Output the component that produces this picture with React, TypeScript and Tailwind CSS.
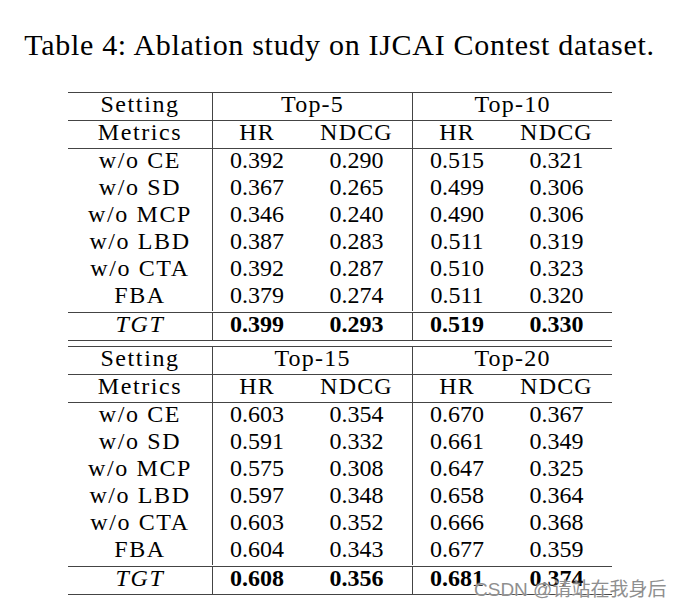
import { FC } from 'react';

type Half = {
  groups: [string, string];
  rows: [string, string, string, string, string][];
  best: [string, string, string, string];
};

const halves: Half[] = [
  {
    groups: ['Top-5', 'Top-10'],
    rows: [
      ['w/o CE', '0.392', '0.290', '0.515', '0.321'],
      ['w/o SD', '0.367', '0.265', '0.499', '0.306'],
      ['w/o MCP', '0.346', '0.240', '0.490', '0.306'],
      ['w/o LBD', '0.387', '0.283', '0.511', '0.319'],
      ['w/o CTA', '0.392', '0.287', '0.510', '0.323'],
      ['FBA', '0.379', '0.274', '0.511', '0.320'],
    ],
    best: ['0.399', '0.293', '0.519', '0.330'],
  },
  {
    groups: ['Top-15', 'Top-20'],
    rows: [
      ['w/o CE', '0.603', '0.354', '0.670', '0.367'],
      ['w/o SD', '0.591', '0.332', '0.661', '0.349'],
      ['w/o MCP', '0.575', '0.308', '0.647', '0.325'],
      ['w/o LBD', '0.597', '0.348', '0.658', '0.364'],
      ['w/o CTA', '0.603', '0.352', '0.666', '0.368'],
      ['FBA', '0.604', '0.343', '0.677', '0.359'],
    ],
    best: ['0.608', '0.356', '0.681', '0.374'],
  },
];

const Rule: FC = () => <div className="h-px bg-[#444]" />;

const rowCls = 'grid grid-cols-[145px_88px_112px_88px_111px] h-[27px] leading-[22px] text-center';

// labels (not numbers) get a bit of tracking to get near the wider book face
const Row: FC<{ cells: string[]; bold?: boolean; italicFirst?: boolean; label?: boolean }> = ({
  cells,
  bold,
  italicFirst,
  label,
}) => {
  const v = `${bold ? 'font-bold' : ''} ${label ? 'tracking-[1.2px]' : ''}`;
  return (
    <div className={rowCls}>
      <div className={`border-r border-[#444] tracking-[1.6px] ${italicFirst ? 'italic' : ''}`}>{cells[0]}</div>
      <div className={v}>{cells[1]}</div>
      <div className={`border-r border-[#444] ${v}`}>{cells[2]}</div>
      <div className={v}>{cells[3]}</div>
      <div className={v}>{cells[4]}</div>
    </div>
  );
};

const HalfTable: FC<{ half: Half }> = ({ half }) => (
  <div>
    <Rule />
    <div className={`${rowCls} tracking-[1.2px]`}>
      <div className="border-r border-[#444] tracking-[1.6px]">Setting</div>
      <div className="col-span-2 border-r border-[#444]">{half.groups[0]}</div>
      <div className="col-span-2">{half.groups[1]}</div>
    </div>
    <Rule />
    <Row cells={['Metrics', 'HR', 'NDCG', 'HR', 'NDCG']} label />
    <Rule />
    <div className="pb-px">
      {half.rows.map((r) => (
        <Row key={r[0]} cells={r} />
      ))}
    </div>
    <Rule />
    <Row cells={['TGT', ...half.best]} bold italicFirst />
    <Rule />
  </div>
);

const App: FC = () => (
  <div className="relative w-[682px] h-[610px] bg-white text-black font-['Liberation_Serif',serif]">
    <div className="w-[679px] pt-[30px] text-center text-[30px] leading-[30px] tracking-[0.7px]">
      Table 4: Ablation study on IJCAI Contest dataset.
    </div>
    <div className="ml-[68px] mt-[32px] w-[544px] text-[24px]">
      <HalfTable half={halves[0]} />
      <div className="h-[5px]" />
      <HalfTable half={halves[1]} />
    </div>
    <div className="absolute left-[474px] top-[579px] text-[19px] leading-[21px] text-[#8f8f8f] font-['Liberation_Sans','Noto_Sans_CJK_SC',sans-serif] [text-shadow:0_0_2px_#fff]">
      CSDN @请站在我身后
    </div>
  </div>
);

export default App;
